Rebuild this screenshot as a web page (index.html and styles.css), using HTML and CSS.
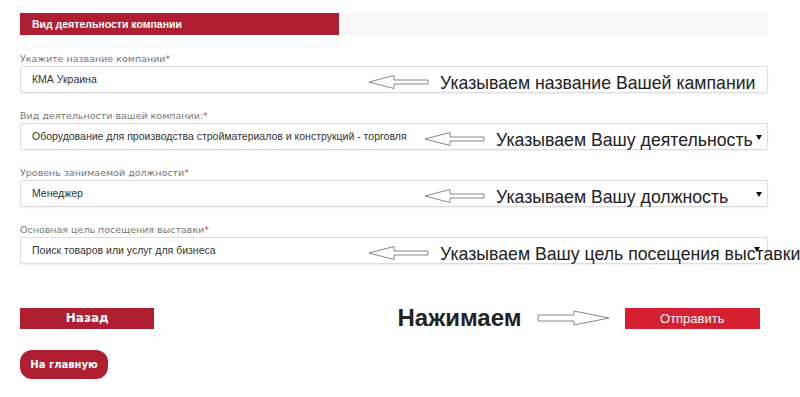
FILE: index.html
```html
<!DOCTYPE html>
<html>
<head>
<meta charset="utf-8" />
<title>Регистрация - Вид деятельности компании</title>
<link rel="stylesheet" href="styles.css">
</head>
<body>
<div class="page">
  <div class="tabbar">
    <div class="tab">Вид деятельности компании</div>
  </div>

  <div class="fields">
    <div class="field">
      <label>Укажите название компании<span class="req">*</span></label>
      <div class="input">КМА Украина</div>
      <div class="note wide">
        <svg class="arrow" width="62" height="16" viewBox="0 0 62 16"><path d="M1 8 L26 1.5 L26 6 L60 6 L60 10 L26 10 L26 14.5 Z" fill="#fff" stroke="#888" stroke-width="1"/></svg>
        <span>Указываем название Вашей кампании</span>
      </div>
    </div>

    <div class="field">
      <label>Вид деятельности вашей компании:<span class="req">*</span></label>
      <div class="input select">Оборудование для производства стройматериалов и конструкций - торговля</div>
      <div class="note narrow">
        <svg class="arrow" width="62" height="16" viewBox="0 0 62 16"><path d="M1 8 L26 1.5 L26 6 L60 6 L60 10 L26 10 L26 14.5 Z" fill="#fff" stroke="#888" stroke-width="1"/></svg>
        <span>Указываем Вашу деятельность</span>
      </div>
    </div>

    <div class="field">
      <label>Уровень занимаемой должности<span class="req">*</span></label>
      <div class="input select">Менеджер</div>
      <div class="note narrow">
        <svg class="arrow" width="62" height="16" viewBox="0 0 62 16"><path d="M1 8 L26 1.5 L26 6 L60 6 L60 10 L26 10 L26 14.5 Z" fill="#fff" stroke="#888" stroke-width="1"/></svg>
        <span>Указываем Вашу должность</span>
      </div>
    </div>

    <div class="field">
      <label>Основная цель посещения выставки<span class="req">*</span></label>
      <div class="input select high">Поиск товаров или услуг для бизнеса</div>
      <div class="note wide">
        <svg class="arrow" width="62" height="16" viewBox="0 0 62 16"><path d="M1 8 L26 1.5 L26 6 L60 6 L60 10 L26 10 L26 14.5 Z" fill="#fff" stroke="#888" stroke-width="1"/></svg>
        <span>Указываем Вашу цель посещения выставки</span>
      </div>
    </div>
  </div>

  <div class="actions">
    <a class="btn back" href="#">Назад</a>
    <div class="press">
      <span>Нажимаем</span>
      <svg class="arrow" width="74" height="16" viewBox="0 0 74 16"><path d="M1 5 L37 5 L37 1 L72 8 L37 15 L37 11 L1 11 Z" fill="#fff" stroke="#888" stroke-width="1"/></svg>
    </div>
    <a class="btn send" href="#">Отправить</a>
  </div>

  <a class="home" href="#">На главную</a>
</div>
</body>
</html>
```

FILE: styles.css
```css
* {
  margin: 0;
  padding: 0;
  box-sizing: border-box;
}
body {
  background: #fff;
  font-family: 'DejaVu Sans', Verdana, sans-serif;
  overflow: hidden;
}
a {
  text-decoration: none;
}
.page {
  padding: 13px 0 0 20px;
  width: 768px;
}
.tabbar {
  background-color: #f8f8f8;
  height: 22px;
}
.tab {
  background-color: #af1f31;
  color: #fff;
  font-family: 'Liberation Sans', Arial, sans-serif;
  font-size: 10.5px;
  font-weight: bold;
  height: 22px;
  line-height: 22px;
  padding-left: 12px;
  width: 319px;
}
.fields {
  margin-top: 18px;
}
.field {
  margin-bottom: 17px;
  position: relative;
}
.field label {
  color: #777;
  display: block;
  font-size: 9.5px;
  height: 13px;
  line-height: 12px;
}
.req {
  color: #e0394b;
}
.input {
  border: 1px solid #dcdcdc;
  border-radius: 2px;
  box-shadow: 0 1px 2px rgba(0,0,0,.06);
  color: #333;
  font-family: 'Liberation Sans', Arial, sans-serif;
  font-size: 10.5px;
  height: 27px;
  line-height: 25px;
  padding-left: 11px;
  position: relative;
}
.input.select::after {
  border-left: 3px solid transparent;
  border-right: 3px solid transparent;
  border-top: 5px solid #111;
  content: '';
  position: absolute;
  right: 5px;
  top: 11px;
}
.input.high::after {
  top: 9px;
  right: 7px;
}
.note {
  align-items: center;
  color: #222;
  display: flex;
  font-family: 'Liberation Sans', Arial, sans-serif;
  font-size: 17.7px;
  gap: 10px;
  position: absolute;
  top: 20px;
  white-space: nowrap;
}
.note .arrow {
  margin-bottom: 4px;
}
.note.wide {
  left: 348px;
}
.note.narrow {
  left: 404px;
}
.actions {
  align-items: center;
  display: flex;
  margin-top: 40px;
  width: 740px;
}
.btn {
  color: #fff;
  display: block;
  height: 21px;
  line-height: 21px;
  text-align: center;
}
.back {
  background-color: #af1f31;
  font-size: 12px;
  font-weight: bold;
  width: 135px;
}
.send {
  background-color: #d61f30;
  font-family: 'Liberation Sans', Arial, sans-serif;
  font-size: 13px;
  width: 136px;
}
.press {
  align-items: center;
  display: flex;
  gap: 15px;
  margin-left: 243px;
  margin-right: 14px;
}
.press span {
  color: #222;
  font-family: 'Liberation Sans', Arial, sans-serif;
  font-size: 24px;
  font-weight: bold;
}
.home {
  background-color: #af1f31;
  border-radius: 12px;
  color: #fff;
  display: inline-block;
  font-size: 10px;
  font-weight: bold;
  height: 29px;
  line-height: 29px;
  margin-top: 18px;
  text-align: center;
  width: 88px;
}
```
